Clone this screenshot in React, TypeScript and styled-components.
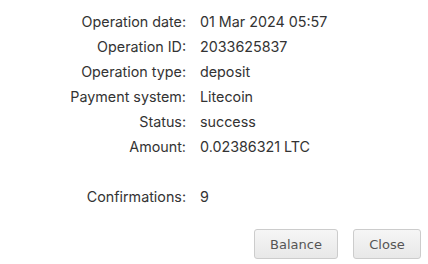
import { Fragment } from "react";
import styled, { createGlobalStyle } from "styled-components";

const GlobalStyle = createGlobalStyle`
  html, body {
    margin: 0;
    padding: 0;
    background: #ffffff;
  }
`;

const Dialog = styled.div`
  width: 428px;
  height: 264px;
  box-sizing: border-box;
  display: flex;
  flex-direction: column;
  padding: 9px 7px 5px 0;
`;

const Details = styled.div`
  display: grid;
  grid-template-columns: 186px auto;
  column-gap: 14px;
  grid-auto-rows: 25px;
  align-items: center;
  font-family: "Inter", "Liberation Sans", sans-serif;
  font-size: 14.3px;
  color: #333333;
`;

const Label = styled.div`
  text-align: right;
`;

const Value = styled.div`
  text-align: left;
`;

const Spacer = styled.div`
  grid-column: 1 / span 2;
`;

const Footer = styled.div`
  margin-top: auto;
  display: flex;
  justify-content: flex-end;
  gap: 15px;
`;

const Button = styled.button<{ $w: number }>`
  width: ${(p) => p.$w}px;
  height: 30px;
  border: 1px solid #cccccc;
  border-radius: 3px;
  background: linear-gradient(#f6f6f6, #e8e8e8);
  color: #555555;
  font-family: "DejaVu Sans", Verdana, sans-serif;
  font-size: 13px;
  padding: 0;
  cursor: pointer;
`;

const rows: [string, string][] = [
  ["Operation date:", "01 Mar 2024 05:57"],
  ["Operation ID:", "2033625837"],
  ["Operation type:", "deposit"],
  ["Payment system:", "Litecoin"],
  ["Status:", "success"],
  ["Amount:", "0.02386321 LTC"],
];

export default function App() {
  return (
    <Dialog>
      <GlobalStyle />
      <Details>
        {rows.map(([label, value]) => (
          <Fragment key={label}>
            <Label>{label}</Label>
            <Value>{value}</Value>
          </Fragment>
        ))}
        <Spacer />
        <Label>Confirmations:</Label>
        <Value>9</Value>
      </Details>
      <Footer>
        <Button $w={84}>Balance</Button>
        <Button $w={68}>Close</Button>
      </Footer>
    </Dialog>
  );
}
